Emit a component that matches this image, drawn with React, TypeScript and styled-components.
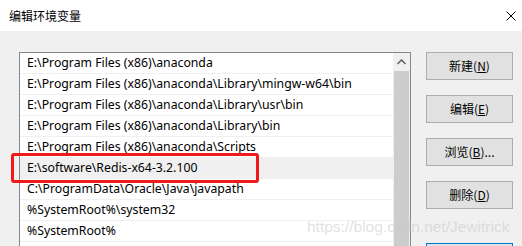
import React from "react";
import styled, { createGlobalStyle } from "styled-components";

const GlobalStyle = createGlobalStyle`
  html, body { margin: 0; padding: 0; }
  body {
    width: 522px;
    height: 246px;
    overflow: hidden;
    background: #f0f0f0;
    font-family: "Noto Sans", "Noto Sans CJK SC", sans-serif;
    font-size: 12px;
    color: #000;
  }
`;

const Window = styled.div`
  position: relative;
  width: 522px;
  height: 246px;
  display: flex;
  flex-direction: column;
  overflow: hidden;
  background: #f0f0f0;
`;

const TitleBar = styled.div`
  height: 31px;
  flex: 0 0 31px;
  background: #ffffff;
  display: flex;
  align-items: center;
  justify-content: space-between;
  padding: 0 6px 0 9px;
  box-sizing: border-box;
`;

const Title = styled.span`
  font-family: "Noto Sans CJK SC", sans-serif;
  font-size: 12px;
  line-height: 16px;
  color: #000;
`;

const CloseButton = styled.div`
  width: 10px;
  height: 10px;
  display: flex;
`;

const Body = styled.div`
  flex: 1;
  display: flex;
  gap: 15px;
  padding: 21px 0 0 19px;
  border-left: 1px solid #a9a9a9;
  box-sizing: border-box;
  margin-left: -1px;
`;

const ListBox = styled.div`
  width: 392px;
  height: 240px;
  flex: 0 0 392px;
  box-sizing: border-box;
  border: 1px solid #828790;
  border-bottom: none;
  background: #ffffff;
  display: flex;
`;

const Rows = styled.div`
  flex: 1;
  display: flex;
  flex-direction: column;
`;

const Row = styled.div<{ $selected?: boolean }>`
  height: 21px;
  flex: 0 0 21px;
  box-sizing: border-box;
  border-bottom: 1px solid #f0f0f0;
  padding-left: 7px;
  display: flex;
  align-items: center;
  white-space: nowrap;
  overflow: hidden;
  font-size: 12.25px;
  line-height: 20px;
  background: ${(p) => (p.$selected ? "#f0f0f0" : "transparent")};
`;

const ScrollBar = styled.div`
  width: 17px;
  flex: 0 0 17px;
  background: #f0f0f0;
  display: flex;
  flex-direction: column;
`;

const ScrollArrow = styled.div`
  height: 18px;
  display: flex;
  align-items: center;
  justify-content: center;
`;

const ScrollThumb = styled.div`
  flex: 1;
  margin: 0 1px;
  background: #cdcdcd;
`;

const Buttons = styled.div`
  display: flex;
  flex-direction: column;
  gap: 15px;
`;

const Button = styled.div<{ $focused?: boolean }>`
  width: 87px;
  height: 28px;
  flex: 0 0 28px;
  box-sizing: border-box;
  border: 1px solid ${(p) => (p.$focused ? "#0078d7" : "#adadad")};
  background: #e1e1e1;
  display: flex;
  align-items: center;
  justify-content: center;
  font-family: "Noto Sans CJK SC", sans-serif;
  font-size: 12px;
  line-height: 16px;
  color: #000;
`;

const ButtonGap = styled.div`
  height: 4px;
  flex: 0 0 4px;
`;

const Highlight = styled.div`
  position: absolute;
  left: 11px;
  top: 153px;
  width: 248px;
  height: 30px;
  box-sizing: border-box;
  border: 3px solid #f01a1a;
  border-radius: 3px;
`;

const Watermark = styled.div`
  position: absolute;
  left: 307px;
  top: 217px;
  font-family: "Liberation Sans", Arial, sans-serif;
  font-size: 15.5px;
  line-height: 20px;
  color: rgba(200, 200, 200, 0.55);
  white-space: nowrap;
  pointer-events: none;
`;

const paths = [
  "E:\\Program Files (x86)\\anaconda",
  "E:\\Program Files (x86)\\anaconda\\Library\\mingw-w64\\bin",
  "E:\\Program Files (x86)\\anaconda\\Library\\usr\\bin",
  "E:\\Program Files (x86)\\anaconda\\Library\\bin",
  "E:\\Program Files (x86)\\anaconda\\Scripts",
  "E:\\software\\Redis-x64-3.2.100",
  "C:\\ProgramData\\Oracle\\Java\\javapath",
  "%SystemRoot%\\system32",
  "%SystemRoot%",
  "",
];

const buttons: { label: string; key: string; suffix?: string }[] = [
  { label: "新建", key: "N" },
  { label: "编辑", key: "E" },
  { label: "浏览", key: "B", suffix: "..." },
  { label: "删除", key: "D" },
];

export default function App() {
  return (
    <>
      <GlobalStyle />
      <Window>
        <TitleBar>
          <Title>编辑环境变量</Title>
          <CloseButton>
            <svg width="10" height="10" viewBox="0 0 10 10">
              <path d="M0.5 0.5 L9.5 9.5 M9.5 0.5 L0.5 9.5" stroke="#000" strokeWidth="1" fill="none" />
            </svg>
          </CloseButton>
        </TitleBar>
        <Body>
          <ListBox>
            <Rows>
              {paths.map((p, i) => (
                <Row key={i} $selected={i === 5}>
                  {p}
                </Row>
              ))}
            </Rows>
            <ScrollBar>
              <ScrollArrow>
                <svg width="9" height="6" viewBox="0 0 9 6">
                  <path d="M0.5 5 L4.5 1 L8.5 5" stroke="#606060" strokeWidth="1.5" fill="none" />
                </svg>
              </ScrollArrow>
              <ScrollThumb />
            </ScrollBar>
          </ListBox>
          <Buttons>
            {buttons.map((b) => (
              <Button key={b.key}>
                {b.label}(<u>{b.key}</u>){b.suffix ?? ""}
              </Button>
            ))}
            <ButtonGap />
            <Button $focused />
          </Buttons>
        </Body>
        <Highlight />
        <Watermark>https://blog.csdn.net/Jewitrick</Watermark>
      </Window>
    </>
  );
}
